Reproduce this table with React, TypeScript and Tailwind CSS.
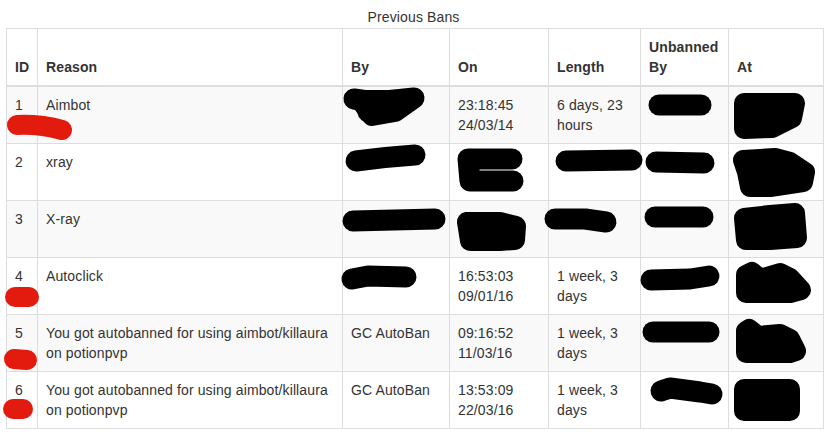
const rows = [
  { id: "1", reason: "Aimbot", by: "", on: "23:18:45 24/03/14", length: "6 days, 23 hours" },
  { id: "2", reason: "xray", by: "", on: "", length: "" },
  { id: "3", reason: "X-ray", by: "", on: "", length: "" },
  { id: "4", reason: "Autoclick", by: "", on: "16:53:03 09/01/16", length: "1 week, 3 days" },
  { id: "5", reason: "You got autobanned for using aimbot/killaura on potionpvp", by: "GC AutoBan", on: "09:16:52 11/03/16", length: "1 week, 3 days" },
  { id: "6", reason: "You got autobanned for using aimbot/killaura on potionpvp", by: "GC AutoBan", on: "13:53:09 22/03/16", length: "1 week, 3 days" },
];

// marker scribbles hiding names and addresses
const black = [
  "M354,99 L375,102 L414,98",
  "M368,112 L398,108",
  "M659,105 L701,105",
  "M356,161 Q385,157 415,155",
  "M512,159 L468,159 L470,181 L513,181",
  "M566,161 L632,160",
  "M656,162 L704,163",
  "M353,221 L435,219",
  "M555,219 L585,219 L606,222",
  "M655,217 L703,217",
  "M352,279 L368,276 L406,277",
  "M651,280 L690,279 L709,276",
  "M653,332 L709,332",
  "M661,391 L670,388 L700,392 L712,394",
];

const blobs = [
  "744,103 795,103 792,118 772,128 744,129",
  "743,160 775,158 790,162 805,172 803,182 770,187 750,187 747,172",
  "467,222 500,222 516,226 515,240 500,241 470,241",
  "744,218 770,215 795,213 797,238 770,240 746,240",
  "746,275 752,272 760,279 780,273 790,278 801,290 790,293 746,293",
  "746,331 749,329 758,336 780,334 790,339 796,351 790,353 746,353",
  "744,389 790,389 790,411 744,411",
  "360,100 412,100 395,112 372,116",
];

const red = ["M17,125 Q40,124 62,130", "M15,297 L29,297", "M14,359 L27,360", "M13,409 L23,409"];

export default function App() {
  return (
    <div className="relative w-[827px] h-[444px] bg-white text-[#333] text-[14px] leading-5 tracking-[0.12px] font-['Liberation_Sans',Arial,sans-serif]">
      <div className="h-[28px] pt-[7px] text-center">Previous Bans</div>
      <table className="ml-[6px] w-[817px] table-fixed border-collapse">
        <colgroup>
          <col className="w-[31px]" />
          <col className="w-[305px]" />
          <col className="w-[107px]" />
          <col className="w-[99px]" />
          <col className="w-[92px]" />
          <col className="w-[88px]" />
          <col className="w-[95px]" />
        </colgroup>
        <thead>
          <tr>
            {["ID", "Reason", "By", "On", "Length", "Unbanned By", "At"].map((h) => (
              <th
                key={h}
                className="border border-[#ddd] border-b-2 p-2 text-left align-bottom font-bold"
              >
                {h}
              </th>
            ))}
          </tr>
        </thead>
        <tbody>
          {rows.map((r, i) => (
            <tr key={r.id} className={i % 2 === 0 ? "bg-[#f9f9f9]" : "bg-white"}>
              <td className="border border-[#ddd] p-2 align-top h-[57px]">{r.id}</td>
              <td className="border border-[#ddd] p-2 align-top">{r.reason}</td>
              <td className="border border-[#ddd] p-2 align-top">{r.by}</td>
              <td className="border border-[#ddd] p-2 align-top">{r.on}</td>
              <td className="border border-[#ddd] p-2 align-top">{r.length}</td>
              <td className="border border-[#ddd] p-2 align-top"></td>
              <td className="border border-[#ddd] p-2 align-top"></td>
            </tr>
          ))}
        </tbody>
      </table>

      <svg className="pointer-events-none absolute inset-0" width="827" height="444" viewBox="0 0 827 444">
        <g fill="none" stroke="#000" strokeLinecap="round" strokeLinejoin="round" strokeWidth="21">
          {black.map((d) => (
            <path key={d} d={d} />
          ))}
        </g>
        <g fill="#000" stroke="#000" strokeLinejoin="round" strokeWidth="20">
          {blobs.map((p) => (
            <polygon key={p} points={p} />
          ))}
        </g>
        <g fill="none" stroke="#e31a0e" strokeLinecap="round" strokeWidth="20">
          {red.map((d) => (
            <path key={d} d={d} />
          ))}
        </g>
      </svg>
    </div>
  );
}
